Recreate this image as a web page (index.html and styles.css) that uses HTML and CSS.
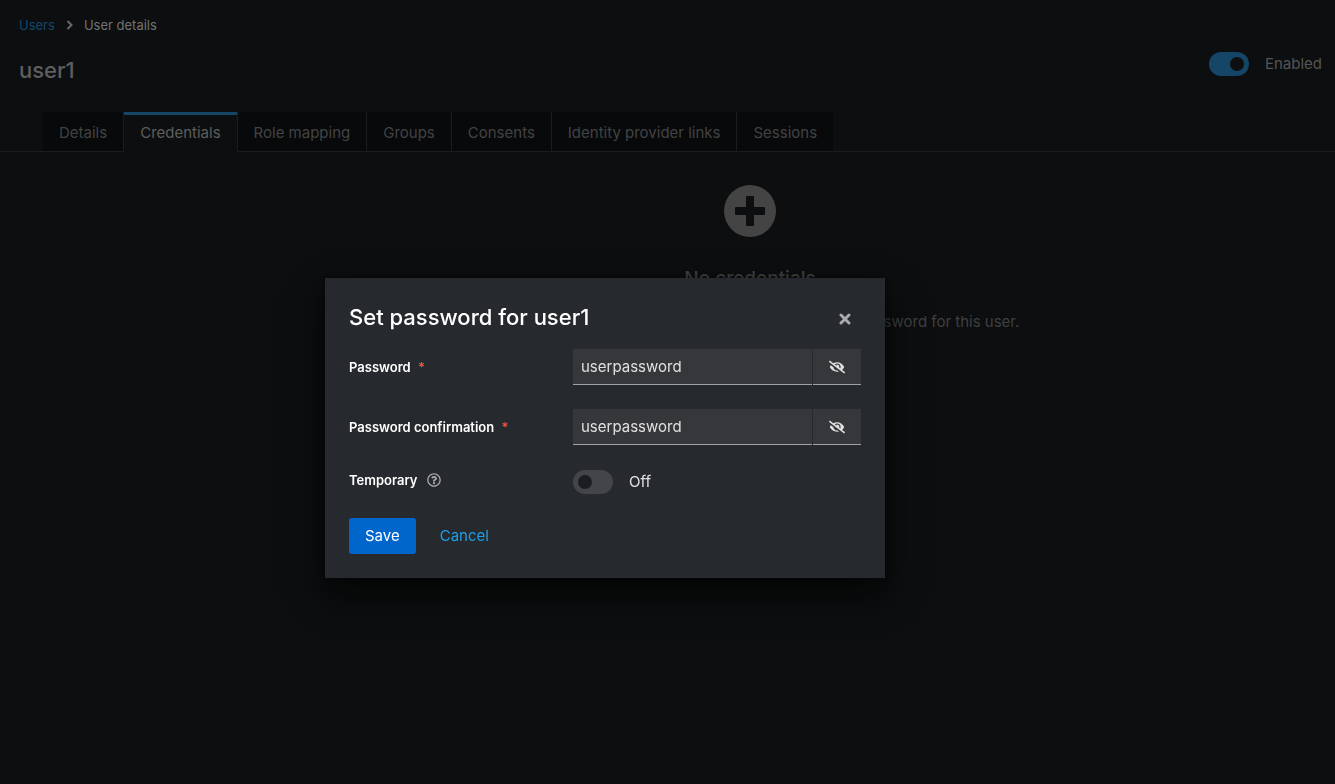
FILE: index.html
```html
<!DOCTYPE html>
<html lang="en">
<head>
<meta charset="utf-8">
<meta name="viewport" content="width=device-width, initial-scale=1">
<title>User details</title>
<link rel="stylesheet" href="styles.css">
</head>
<body>
<main class="page">
  <nav class="breadcrumb" aria-label="Breadcrumb">
    <a href="#users">Users</a>
    <svg class="chevron" viewBox="0 0 8 10" aria-hidden="true"><path d="M2 1l4 4-4 4" fill="none" stroke="currentColor" stroke-width="2"/></svg>
    <span aria-current="page">User details</span>
  </nav>
  <header class="page-header">
    <h1>user1</h1>
    <label class="switch enabled"><input type="checkbox" role="switch" checked><span>Enabled</span></label>
  </header>
  <div class="tabs" role="tablist">
    <button class="tab" role="tab">Details</button>
    <button class="tab current" role="tab" aria-selected="true">Credentials</button>
    <button class="tab" role="tab">Role mapping</button>
    <button class="tab" role="tab">Groups</button>
    <button class="tab" role="tab">Consents</button>
    <button class="tab" role="tab">Identity provider links</button>
    <button class="tab" role="tab">Sessions</button>
  </div>
  <section class="empty">
    <svg class="plus" viewBox="0 0 52 52" aria-hidden="true"><path fill="currentColor" fill-rule="evenodd" d="M26 0a26 26 0 1 0 0 52 26 26 0 0 0 0-52zM23 11h6q1 0 1 1v10h10q1 0 1 1v6q0 1-1 1H30v10q0 1-1 1h-6q-1 0-1-1V30H12q-1 0-1-1v-6q0-1 1-1h10V12q0-1 1-1z"/></svg>
    <h2>No credentials</h2>
    <p>This user does not have any credentials. You can set password for this user.</p>
  </section>
</main>
<div class="backdrop">
  <div class="modal" role="dialog" aria-modal="true" aria-labelledby="modal-title">
    <header class="modal-header">
      <h2 id="modal-title">Set password for user1</h2>
      <button class="close" aria-label="Close"><svg viewBox="0 0 12 12" aria-hidden="true"><path d="M2 2l8 8M10 2l-8 8" fill="none" stroke="currentColor" stroke-width="3" stroke-linecap="round"/></svg></button>
    </header>
    <form class="form">
      <div class="row">
        <label for="password">Password <span class="required">*</span></label>
        <div class="input-group">
          <input id="password" type="text" value="userpassword">
          <button type="button" aria-label="Hide password"><svg viewBox="0 0 640 512" aria-hidden="true"><use href="#eye-slash"/></svg></button>
        </div>
      </div>
      <div class="row">
        <label for="confirmation">Password confirmation <span class="required">*</span></label>
        <div class="input-group">
          <input id="confirmation" type="text" value="userpassword">
          <button type="button" aria-label="Hide password confirmation"><svg viewBox="0 0 640 512" aria-hidden="true"><path id="eye-slash" fill="currentColor" d="M320 400c-75.85 0-137.25-58.71-142.9-133.11L72.2 185.82c-13.79 17.3-26.48 35.59-36.72 55.59a32.35 32.35 0 0 0 0 29.19C89.71 376.41 197.07 448 320 448c26.91 0 52.87-4 77.89-10.46L346 397.39a144.13 144.13 0 0 1-26 2.61zm313.82 58.1l-110.55-85.44a331.25 331.25 0 0 0 81.25-102.07 32.35 32.35 0 0 0 0-29.19C550.29 135.59 442.93 64 320 64a308.15 308.15 0 0 0-147.32 37.7L45.46 3.37A16 16 0 0 0 23 6.18L3.37 31.45A16 16 0 0 0 6.18 53.9l588.36 454.73a16 16 0 0 0 22.46-2.81l19.64-25.27a16 16 0 0 0-2.82-22.45zm-183.72-142l-39.3-30.38A94.75 94.75 0 0 0 416 256a94.76 94.76 0 0 0-121.31-92.21A47.65 47.65 0 0 1 304 192a46.64 46.64 0 0 1-1.54 10l-73.61-56.89A142.31 142.31 0 0 1 320 112a143.92 143.92 0 0 1 144 144c0 21.63-5.29 41.79-13.9 60.11z"/></svg></button>
        </div>
      </div>
      <div class="row temporary">
        <div class="label-group">
          <label for="temporary">Temporary</label>
          <button type="button" class="help" aria-label="More info"><svg viewBox="0 0 512 512" aria-hidden="true"><path fill="currentColor" d="M256 8C119.043 8 8 119.083 8 256c0 136.997 111.043 248 248 248s248-111.003 248-248C504 119.083 392.957 8 256 8zm0 448c-110.532 0-200-89.431-200-200 0-110.495 89.472-200 200-200 110.491 0 200 89.471 200 200 0 110.53-89.431 200-200 200zm107.244-255.2c0 67.052-72.421 68.084-72.421 92.863V300c0 6.627-5.373 12-12 12h-45.647c-6.627 0-12-5.373-12-12v-8.659c0-35.745 27.1-50.034 47.579-61.516 17.561-9.845 28.324-16.541 28.324-29.579 0-17.246-21.999-28.693-39.784-28.693-23.189 0-33.894 10.977-48.942 29.969-4.057 5.12-11.46 6.071-16.666 2.124l-27.824-21.098c-5.107-3.872-6.251-11.066-2.644-16.363C184.846 131.491 214.94 112 261.794 112c49.071 0 101.45 38.304 101.45 88.8zM298 368c0 23.159-18.841 42-42 42s-42-18.841-42-42 18.841-42 42-42 42 18.841 42 42z"/></svg></button>
        </div>
        <label class="switch" for="temporary"><input id="temporary" type="checkbox" role="switch"><span>Off</span></label>
      </div>
      <div class="actions">
        <button type="submit" class="save">Save</button>
        <button type="button" class="cancel">Cancel</button>
      </div>
    </form>
  </div>
</div>
</body>
</html>
```
FILE: styles.css
```css
* { box-sizing: border-box; }

body {
  margin: 0;
  background: #0c0e0f;
  color: #555;
  font: 15px/24px Inter, "Open Sans", sans-serif;
}

h1, h2, p { margin: 0; }

button, input { font: inherit; color: inherit; }

button {
  margin: 0;
  padding: 0;
  border: 0;
  background: none;
}

svg { display: block; }

.breadcrumb {
  display: flex;
  align-items: center;
  gap: 10px;
  padding: 13px 19px 0;
  font-size: 13px;
  color: #737373;
}

.breadcrumb a {
  color: #14486b;
  text-decoration: none;
}

.chevron {
  width: 9px;
  height: 10px;
  color: #686868;
}

.page-header {
  display: flex;
  justify-content: space-between;
  align-items: flex-start;
  padding: 15px 13px 0 19px;
}

.page-header h1 {
  padding-top: 2px;
  font-size: 22px;
  line-height: 32px;
  font-weight: 500;
  color: #5e5e5e;
}

.switch {
  display: flex;
  align-items: center;
  gap: 16px;
}

.switch input {
  appearance: none;
  display: flex;
  align-items: center;
  width: 40px;
  height: 24px;
  margin: 0;
  padding: 0 5px;
  border-radius: 12px;
  background: #444548;
}

.switch input::before {
  content: "";
  width: 14px;
  height: 14px;
  border-radius: 50%;
  background: #1b1d21;
}

.switch input:checked {
  justify-content: flex-end;
  background: #154567;
}

.switch input:checked::before { background: #0c0e0f; }

.tabs {
  display: flex;
  margin-top: 26px;
  padding-left: 43px;
  box-shadow: inset 0 -1px #1b1c1e;
}

.tab {
  height: 40px;
  padding: 2px 16px 0;
  border-right: 1px solid #1b1c1e;
  border-bottom: 1px solid #1b1c1e;
  background: #08090a;
  color: #424344;
}

.tab:last-child { border-right: 0; }

.tab.current {
  border-bottom-color: #0c0e0f;
  background: #0c0e0f;
  box-shadow: inset 0 3px #154567;
  color: #5e5e5e;
}

.empty {
  display: flex;
  flex-direction: column;
  align-items: center;
  padding: 33px 0 0 165px;
  text-align: center;
  color: #3f4041;
}

.plus {
  width: 52px;
  height: 52px;
  color: #434443;
}

.empty h2 {
  margin-top: 27px;
  font-size: 19px;
  line-height: 30px;
  font-weight: 500;
  color: #424344;
}

.empty p { margin-top: 16px; }

.backdrop {
  position: fixed;
  inset: 0;
  display: flex;
  align-items: center;
  justify-content: center;
  padding: 72px 125px 0 0;
}

.modal {
  width: 560px;
  max-width: 100%;
  padding: 24px;
  background: #26292d;
  box-shadow: 0 16px 32px rgba(3, 3, 3, 0.8), 0 0 8px rgba(3, 3, 3, 0.4);
  color: #e0e0e0;
}

.modal-header {
  display: flex;
  align-items: center;
  justify-content: space-between;
  margin-bottom: 16px;
  padding-right: 10px;
}

.modal-header h2 {
  font-size: 22px;
  line-height: 31px;
  font-weight: 500;
  color: #fff;
}

.close {
  padding-top: 3px;
  color: #aaabac;
}

.close svg {
  width: 12px;
  height: 12px;
}

.form {
  display: flex;
  flex-direction: column;
  gap: 24px;
}

.row {
  display: grid;
  grid-template-columns: 224px minmax(0, 1fr);
  align-items: center;
}

.row > label:first-child, .label-group {
  font-size: 13px;
  font-weight: 600;
  color: #fff;
}

.required {
  margin-left: 4px;
  color: #fe5142;
}

.label-group {
  display: flex;
  align-items: center;
  gap: 9px;
  line-height: 20px;
}

.row.temporary {
  align-items: start;
  padding-top: 1px;
}

.help { color: #aaabac; }

.help svg {
  width: 14px;
  height: 14px;
}

.input-group {
  display: flex;
  gap: 1px;
}

.input-group input, .input-group button {
  height: 36px;
  border: 0;
  border-bottom: 1px solid #a0a1a3;
  border-radius: 0;
  background: #36373a;
}

.input-group input {
  flex: 1;
  min-width: 0;
  padding: 0 8px;
}

.input-group button {
  display: grid;
  place-items: center;
  width: 48px;
}

.input-group svg {
  width: 16px;
  height: 14px;
}

.actions {
  display: flex;
  gap: 24px;
}

.actions button { height: 36px; }

.save {
  padding: 0 16px;
  border-radius: 3px;
  background: #06c;
  color: #fff;
}

.cancel { color: #1f9fe8; }
```
